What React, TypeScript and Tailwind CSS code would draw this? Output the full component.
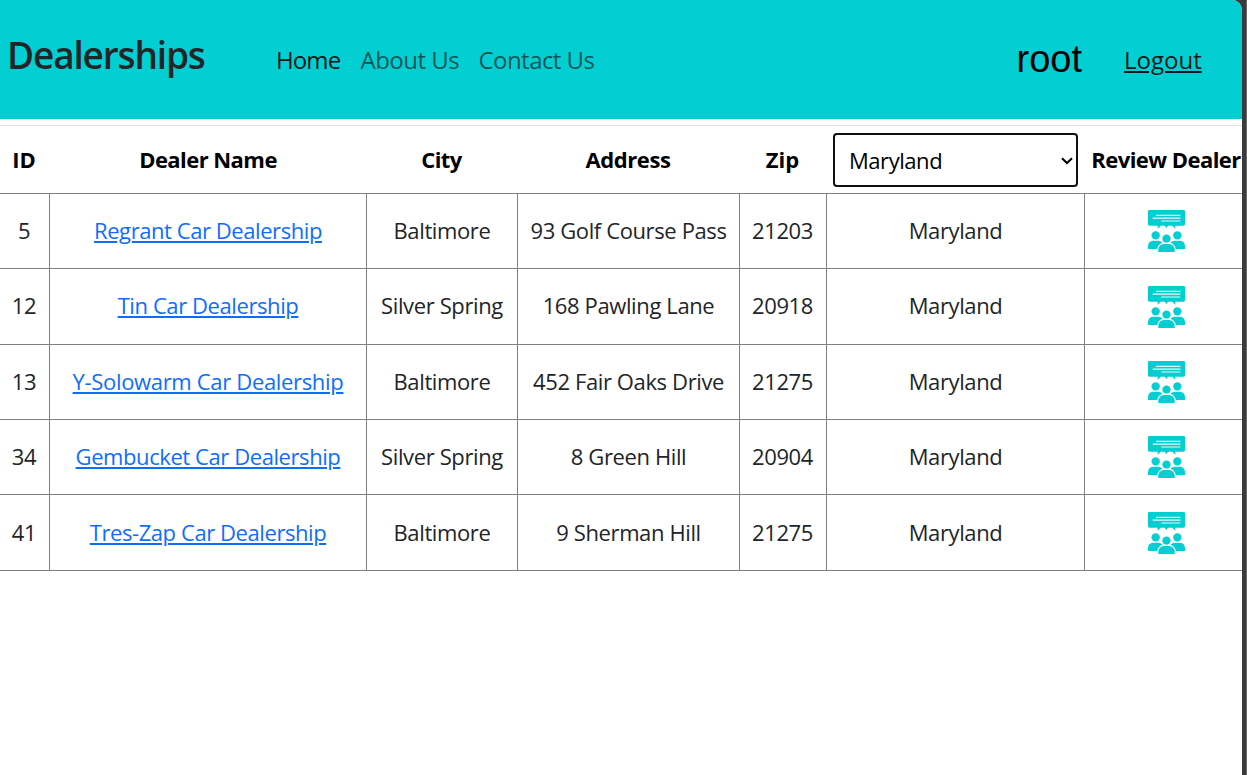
import type { ReactNode } from "react";

type Dealer = {
  id: number;
  name: string;
  nameClass: string;
  city: string;
  address: string;
  zip: string;
  height: string;
};

const dealers: Dealer[] = [
  { id: 5, name: "Regrant Car Dealership", nameClass: "tracking-[-0.43px]", city: "Baltimore", address: "93 Golf Course Pass", zip: "21203", height: "h-[75px]" },
  { id: 12, name: "Tin Car Dealership", nameClass: "tracking-[-0.41px]", city: "Silver Spring", address: "168 Pawling Lane", zip: "20918", height: "h-[76px]" },
  { id: 13, name: "Y-Solowarm Car Dealership", nameClass: "tracking-[-0.33px]", city: "Baltimore", address: "452 Fair Oaks Drive", zip: "21275", height: "h-[75px]" },
  { id: 34, name: "Gembucket Car Dealership", nameClass: "tracking-[-0.42px]", city: "Silver Spring", address: "8 Green Hill", zip: "20904", height: "h-[75px]" },
  { id: 41, name: "Tres-Zap Car Dealership", nameClass: "tracking-[-0.42px]", city: "Baltimore", address: "9 Sherman Hill", zip: "21275", height: "h-[76px]" },
];

const columns = "grid w-[1247px] shrink-0 grid-cols-[50px_317px_151px_222px_87px_258px_162px] border-b border-[#808080]";

function ReviewIcon() {
  return (
    <svg viewBox="24 21 111 126" className="h-[42px] w-[37px]" aria-hidden="true">
      <g fill="#03cfd2">
        <path d="M28 21H131Q135 21 135 25V63Q135 68 131 68H106V77L97 68H84L79 75L74 68H62L53 77V68H28Q24 68 24 63V25Q24 21 28 21Z" />
        <circle cx="47" cy="97" r="12.5" />
        <circle cx="112" cy="97" r="12.5" />
        <path d="M24 138V128Q26 115 38 113H56Q66 114 70 122V138Z" />
        <path d="M135 138V128Q133 115 121 113H103Q93 114 89 122V138Z" />
      </g>
      <g fill="#03cfd2" stroke="#fff" strokeWidth="7" paintOrder="stroke">
        <circle cx="79.5" cy="107" r="12.5" />
        <path d="M55 150V139Q57 126 70 123H89Q102 126 104 139V150Z" />
      </g>
      <path d="M48 37H121M38 45.5H121M64 54H121" stroke="#fff" strokeWidth="3.4" strokeOpacity=".88" />
    </svg>
  );
}

function Cell({ children, last }: { children: ReactNode; last?: boolean }) {
  return (
    <div className={`flex items-center justify-center border-r border-[#808080] whitespace-nowrap ${last ? "pb-0" : "pb-[2px]"}`}>
      {children}
    </div>
  );
}

export default function App() {
  return (
    <div className="flex h-[775px] w-[1247px] overflow-hidden bg-[#3b3b3b] font-['Open_Sans',sans-serif] text-[22px] leading-[33px] text-[#212529]">
      <div className="flex w-[1242px] flex-col overflow-hidden rounded-tr-[10px] bg-white">
        <nav className="flex h-[119px] shrink-0 items-baseline bg-[#03cfd2] pt-[27px] pl-[7px] text-[24px] leading-[36px] whitespace-nowrap">
          <h1 className="w-[269px] text-[37px] leading-[55px] font-semibold tracking-[-1.15px]">Dealerships</h1>
          <a href="#" className="w-[84.5px] tracking-[-0.9px] text-black/90">Home</a>
          <a href="#" className="w-[118px] tracking-[-0.5px] text-black/60">About Us</a>
          <a href="#" className="tracking-[-0.55px] text-black/60">Contact Us</a>
          <span className="relative top-[3px] ml-auto w-[107.5px] font-['Liberation_Sans',sans-serif] text-[38px] text-black">root</span>
          <a href="#" className="w-[118px] text-black/90 underline decoration-[2px] underline-offset-[2px]">Logout</a>
        </nav>

        <div className="mt-[6px] h-px shrink-0 bg-[#dee2e6]" />

        <div className={`${columns} h-[68px] font-bold tracking-[-0.55px] whitespace-nowrap text-black`}>
          <div className="flex items-center justify-center pr-[2px] tracking-normal">ID</div>
          <div className="flex items-center justify-center pr-px">Dealer Name</div>
          <div className="flex items-center justify-center pr-[2px]">City</div>
          <div className="flex items-center justify-center pr-[2px] tracking-[-0.4px]">Address</div>
          <div className="flex items-center justify-center pr-[2px] tracking-normal">Zip</div>
          <div className="flex items-center pl-[6px] font-normal tracking-[-0.45px]">
            <div className="flex h-[54px] w-[245px] items-center justify-between rounded-[4px] border-2 border-[#101010] pt-[2px] pr-[3px] pl-[14px]">
              Maryland
              <svg viewBox="0 0 12 8" className="h-[8px] w-[12px]" fill="none" stroke="currentColor" strokeWidth="2" aria-hidden="true">
                <path d="M1 1.2L6 6L11 1.2" />
              </svg>
            </div>
          </div>
          <div className="flex items-center justify-center">Review Dealer</div>
        </div>

        {dealers.map((d, i) => {
          const last = i === dealers.length - 1;
          return (
            <div key={d.id} className={`${columns} ${d.height} tracking-[-0.38px]`}>
              <Cell last={last}><span className="mr-px">{d.id}</span></Cell>
              <Cell last={last}>
                <a href="#" className={`text-[#0d6efd] underline decoration-[2px] underline-offset-[2px] ${d.nameClass}`}>{d.name}</a>
              </Cell>
              <Cell last={last}>{d.city}</Cell>
              <Cell last={last}>{d.address}</Cell>
              <Cell last={last}><span className="mr-px">{d.zip}</span></Cell>
              <Cell last={last}>Maryland</Cell>
              <div className="flex items-center justify-center">
                <ReviewIcon />
              </div>
            </div>
          );
        })}
      </div>
      <div className="ml-auto w-px bg-[#696969]" />
    </div>
  );
}
